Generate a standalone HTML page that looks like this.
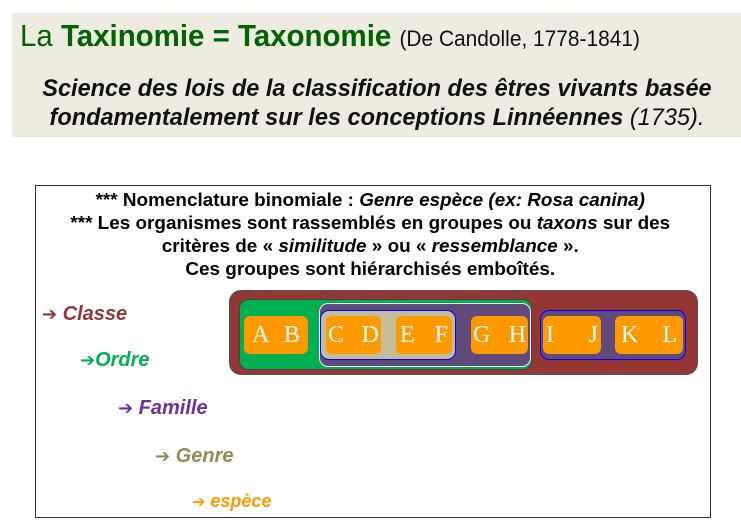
<!DOCTYPE html>
<html><head><meta charset="utf-8"><style>
body{margin:0;width:741px;height:527px;background:#fff;position:relative;overflow:hidden;font-family:"Liberation Sans",sans-serif}
.a{position:absolute;white-space:nowrap}
.hd{left:12px;top:13px;width:729px;height:124px;background:#eeebe0}
.box{left:35px;top:185px;width:674px;height:331px;border:1px solid #333}
.r{position:absolute;border-radius:9px}
.o{position:absolute;background:#ff9900;border-radius:6px;top:316px;height:38px;color:#fff;font:24px "Liberation Serif",serif;display:flex;justify-content:space-between;align-items:center;padding:0 8px;box-sizing:border-box}
.lb{font-weight:bold;font-style:italic;font-size:20px}
.ar{font-style:normal;font-family:"DejaVu Sans",sans-serif;font-size:18px}
.t{font-weight:bold;font-size:18px;text-align:center;width:674px;left:35px;transform:scaleX(1.05);transform-origin:372px 0}
</style></head><body>
<div class="a hd"></div>
<div class="a" style="left:20px;top:18px;font-size:31px;color:#006400;transform:scaleX(0.95);transform-origin:0 0">La <b>Taxinomie = Taxonomie</b> <span style="font-size:22px;color:#111">(De Candolle, 1778-1841)</span></div>
<div class="a" style="left:12px;width:729px;text-align:center;top:74px;font-size:24.5px;line-height:29px;font-weight:bold;font-style:italic;color:#111;transform:scaleX(0.96);transform-origin:376px 0">Science des lois de la classification des êtres vivants basée<br>fondamentalement sur les conceptions Linnéennes <span style="font-weight:normal">(1735).</span></div>
<div class="a box"></div>
<div class="a t" style="top:189px;line-height:23px">*** Nomenclature binomiale : <i>Genre espèce (ex: Rosa canina)</i><br>*** Les organismes sont rassemblés en groupes ou <i>taxons</i> sur des<br>critères de « <i>similitude</i> » ou « <i>ressemblance</i> ».<br>Ces groupes sont hiérarchisés emboîtés.</div>
<div class="a lb" style="left:42px;top:303px;color:#943634"><span class="ar">➔</span> Classe</div>
<div class="a lb" style="left:80px;top:349px;color:#00b050"><span class="ar">➔</span>Ordre</div>
<div class="a lb" style="left:118px;top:397px;color:#7030a0"><span class="ar">➔</span> Famille</div>
<div class="a lb" style="left:155px;top:445px;color:#948a54"><span class="ar">➔</span> Genre</div>
<div class="a lb" style="left:192px;top:491px;color:#ff9900;font-size:18px"><span class="ar" style="font-size:16px">➔</span> espèce</div>
<div class="r" style="left:229px;top:290px;width:469px;height:85px;background:#943634;border:1px solid #555;box-sizing:border-box;border-radius:12px"></div>
<div class="r" style="left:239px;top:299px;width:293px;height:71px;background:#00b050;border:1px solid #444;box-sizing:border-box"></div>
<div class="r" style="left:319px;top:303px;width:212px;height:64px;background:#604a7b;border:1.5px solid #eee;box-sizing:border-box"></div>
<div class="r" style="left:320px;top:310px;width:136px;height:50px;background:#c4bd97;border:1px solid #00f;box-sizing:border-box"></div>
<div class="r" style="left:540px;top:310px;width:146px;height:50px;background:#604a7b;border:1px solid #00f;box-sizing:border-box"></div>
<div class="o" style="left:244px;width:64px"><span>A</span><span>B</span></div>
<div class="o" style="left:326px;width:55px;padding:0 2px"><span>C</span><span>D</span></div>
<div class="o" style="left:396px;width:56px;padding:0 4px"><span>E</span><span>F</span></div>
<div class="o" style="left:471px;width:57px;padding:0 2px"><span>G</span><span>H</span></div>
<div class="o" style="left:543px;width:58px;padding:0 3px 0 3px"><span>I</span><span>J</span></div>
<div class="o" style="left:615px;width:68px;padding:0 6px"><span>K</span><span>L</span></div>
</body></html>
